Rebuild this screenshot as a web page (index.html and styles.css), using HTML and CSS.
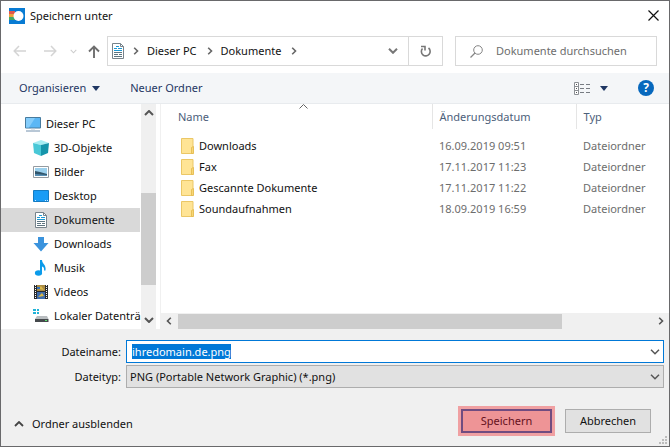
FILE: index.html
```html
<!DOCTYPE html>
<html lang="de">
<head>
  <meta charset="UTF-8" />
  <meta name="viewport" content="width=device-width, initial-scale=1" />
  <title>Speichern unter</title>
  <link rel="stylesheet" href="styles.css">
</head>
<body>
<svg class="defs" width="0" height="0">
  <symbol id="doc" viewBox="0 0 14 17">
    <path d="M1.500 .5H9.500L12.500 3.500V15.500H1.500z" fill="#fff" stroke="#77838b"/>
    <path d="M9.500 .5V3.500H12.500" fill="none" stroke="#77838b"/>
    <path d="M3 5.500H6M7 5.500H11M3 7.500H11M5 3.500H8" stroke="#1b9ad6" stroke-width="1.200"/>
    <path d="M3 9.500H11M3 11.500H7M8 11.500H11M3 13.500H11" stroke="#5d7480"/>
  </symbol>
  <symbol id="down" viewBox="0 0 10 6">
    <path d="M1 .8L5 4.800L9 .8" fill="none" stroke="currentColor" stroke-width="1.500"/>
  </symbol>
  <symbol id="right" viewBox="0 0 6 8">
    <path d="M1.200 .8L4.500 4L1.200 7.200" fill="none" stroke="currentColor" stroke-width="1.600"/>
  </symbol>
  <symbol id="triangle" viewBox="0 0 8 5"><path d="M0 0H8L4 5z" fill="#1f3763"/></symbol>
  <symbol id="folder" viewBox="0 0 13 16">
    <path d="M.5 .5H12V15.500H.5z" fill="#ffe495" stroke="#ebc766"/>
    <path d="M10.500 15.500V9.500L12.500 8.500V15.500z" fill="#f8d775" stroke="#e3b94d" stroke-width=".8"/>
  </symbol>
</svg>

<main class="dialog">
  <header class="titlebar">
    <svg width="16" height="16" viewBox="0 0 16 16">
      <path d="M0 0H16V16H0z" fill="#087bd3"/>
      <path d="M0 3H6V6H0z" fill="#e2574c"/><path d="M0 6H5V9H0z" fill="#f0a13a"/><path d="M0 9H6V12H0z" fill="#43a866"/>
      <circle cx="9.500" cy="8" r="5" fill="#fff"/>
    </svg>
    <h1>Speichern unter</h1>
    <button class="close" aria-label="Schließen">
      <svg width="11" height="11" viewBox="0 0 11 11"><path d="M.5 .5L10.500 10.500M10.500 .5L.5 10.500" stroke="#111" stroke-width="1.200"/></svg>
    </button>
  </header>

  <nav class="navbar">
    <div class="history">
      <button aria-label="Zurück" disabled><svg width="14" height="12" viewBox="0 0 14 12"><path d="M13 6H1.500M6 1L1.200 6L6 11" fill="none" stroke="#d4d4d4" stroke-width="1.500"/></svg></button>
      <button aria-label="Vorwärts" disabled><svg width="14" height="12" viewBox="0 0 14 12"><path d="M1 6H12.500M8 1L12.800 6L8 11" fill="none" stroke="#d4d4d4" stroke-width="1.500"/></svg></button>
      <button class="recent" aria-label="Zuletzt besucht" disabled><svg width="7" height="5"><use href="#down"/></svg></button>
      <button aria-label="Nach oben"><svg width="12" height="13" viewBox="0 0 12 13"><path d="M6 13V1.500M1 6.500L6 1.500L11 6.500" fill="none" stroke="#6e6e6e" stroke-width="1.900"/></svg></button>
    </div>
    <div class="address">
      <svg width="14" height="17"><use href="#doc"/></svg>
      <svg class="sep" width="6" height="8"><use href="#right"/></svg>
      <a href="#">Dieser PC</a>
      <svg class="sep" width="6" height="8"><use href="#right"/></svg>
      <a href="#">Dokumente</a>
      <svg class="sep" width="6" height="8"><use href="#right"/></svg>
      <button class="open" aria-label="Vorherige Orte"><svg width="10" height="6" viewBox="0 0 10 6"><path d="M1 .8L5 4.800L9 .8" fill="none" stroke="#777" stroke-width="2"/></svg></button>
      <button class="refresh" aria-label="Aktualisieren">
        <svg width="12" height="13" viewBox="0 0 12 13"><path d="M2.500 3.500A4.400 4.400 0 1 0 8.500 3" fill="none" stroke="#777" stroke-width="1.600"/><path d="M1 1.500H5V5.500" fill="none" stroke="#777" stroke-width="1.600"/></svg>
      </button>
    </div>
    <label class="search">
      <svg width="13" height="13" viewBox="0 0 13 13"><circle cx="8" cy="5" r="4.300" fill="none" stroke="#858585"/><path d="M5 8L.5 12.500" stroke="#858585" stroke-width="1.200"/></svg>
      <input type="text" placeholder="Dokumente durchsuchen" aria-label="Dokumente durchsuchen">
    </label>
  </nav>

  <div class="toolbar">
    <button>Organisieren <svg width="8" height="5"><use href="#triangle"/></svg></button>
    <button>Neuer Ordner</button>
    <button class="view" aria-label="Ansicht">
      <svg width="17" height="13" viewBox="0 0 17 13">
        <path d="M.5 .5H4.500V12.500H.5zM.5 4.500H4.500M.5 8.500H4.500" fill="#fff" stroke="#8b8f94"/>
        <path d="M2 2.500H3M2 6.500H3M2 10.500H3" stroke="#555"/>
        <path d="M6 2.500H10M12 2.500H16M6 6.500H10M12 6.500H16M6 10.500H10M12 10.500H16" stroke="#777c82"/>
      </svg>
      <svg width="8" height="5"><use href="#triangle"/></svg>
    </button>
    <button class="help" aria-label="Hilfe">?</button>
  </div>

  <div class="content">
    <aside class="sidebar">
      <ul class="tree">
        <li><a class="root" href="#">
          <svg width="16" height="16" viewBox="0 0 16 16"><path d="M.5 1.500H15.500V12H.5z" fill="#5bb7f5" stroke="#477b9e"/><path d="M1 2H10L4 11.500H1z" fill="#85cdfb"/><path d="M6 13H10" stroke="#bccbd8"/><path d="M1 15H15" stroke="#7390ad"/></svg>
          Dieser PC</a></li>
        <li><a href="#">
          <svg width="16" height="16" viewBox="0 0 16 16"><path d="M0 3L8 0L16 3L8 5z" fill="#a6edf3"/><path d="M0 3L8 5V16L1 13z" fill="#49c8d7"/><path d="M8 5L16 3L15 13L8 16z" fill="#1595ab"/></svg>
          3D-Objekte</a></li>
        <li><a href="#">
          <svg width="16" height="16" viewBox="0 0 16 16"><path d="M.5 2.500H15.500V13.500H.5z" fill="#fff" stroke="#949ba1"/><path d="M2 4H14V12H2z" fill="#9bd0ed"/><path d="M2 7L7 8L14 10V12H2z" fill="#31556b"/><path d="M2 10L14 11V12H2z" fill="#568fb5"/></svg>
          Bilder</a></li>
        <li><a href="#">
          <svg width="16" height="16" viewBox="0 0 16 16"><path d="M.5 2.500H15.500V13.500H.5z" fill="#199cf5" stroke="#147bc2"/><path d="M2 12.500H4M12 12.500H15" stroke="#cfeaff" stroke-dasharray="1 1"/></svg>
          Desktop</a></li>
        <li><a class="selected" href="#">
          <svg width="16" height="17"><use href="#doc"/></svg>
          Dokumente</a></li>
        <li><a href="#">
          <svg width="16" height="16" viewBox="0 0 16 16"><path d="M5 1H11V7H15.500L8 15.500L.5 7H5z" fill="#3b93dd"/></svg>
          Downloads</a></li>
        <li><a href="#">
          <svg width="16" height="16" viewBox="0 0 16 16"><ellipse cx="5.500" cy="13" rx="3.600" ry="2.700" fill="#0b9bea"/><path d="M7 0H9C9 4 13.500 4.500 12.500 10.500H11C11.500 8 10.500 7 9 6.500V13H7z" fill="#0b9bea"/></svg>
          Musik</a></li>
        <li><a href="#">
          <svg width="16" height="16" viewBox="0 0 16 16"><path d="M1 1H15V15H1z" fill="#292b2e"/><path d="M4 1H12V7H4z" fill="#a98a42"/><path d="M4 8H12V15H4z" fill="#3f6dad"/><path d="M5 5L8 2L11 6zM5 13L9 9L11 12z" fill="#d8b84a"/><path d="M4 3H7V5H4z" fill="#3574bd"/><path d="M2.500 1V15M13.500 1V15" stroke="#fff" stroke-dasharray="1 1"/></svg>
          Videos</a></li>
        <li><a href="#">
          <svg width="16" height="16" viewBox="0 0 16 16"><path d="M0 1H3V3H0zM4 1H6V3H4zM0 4H3V6H0zM4 4H6V6H4z" fill="#20b3d8"/><path d="M4 8H14L15.500 11H2z" fill="#b9bdc0"/><path d="M2 11H15.500V14H2z" fill="#45494c"/><path d="M12 12.500H14" stroke="#5be36f"/></svg>
          Lokaler Datenträ</a></li>
      </ul>
      <div class="vscroll">
        <svg width="10" height="6" viewBox="0 0 10 6"><path d="M1 5L5 1L9 5" fill="none" stroke="#555" stroke-width="2"/></svg>
        <div class="thumb"></div>
        <svg width="10" height="6" viewBox="0 0 10 6"><path d="M1 1L5 5L9 1" fill="none" stroke="#555" stroke-width="2"/></svg>
      </div>
    </aside>

    <section class="files">
      <table>
        <thead>
        <tr>
          <th class="name">Name<svg class="sort" width="9" height="5" viewBox="0 0 9 5"><path d="M.5 4.500L4.500 .5L8.500 4.500" fill="none" stroke="#666"/></svg></th>
          <th class="date">Änderungsdatum</th>
          <th class="type">Typ</th>
        </tr>
        </thead>
        <tbody>
        <tr><td><svg width="13" height="16"><use href="#folder"/></svg>Downloads</td><td>16.09.2019 09:51</td><td>Dateiordner</td></tr>
        <tr><td><svg width="13" height="16"><use href="#folder"/></svg>Fax</td><td>17.11.2017 11:23</td><td>Dateiordner</td></tr>
        <tr><td><svg width="13" height="16"><use href="#folder"/></svg>Gescannte Dokumente</td><td>17.11.2017 11:22</td><td>Dateiordner</td></tr>
        <tr><td><svg width="13" height="16"><use href="#folder"/></svg>Soundaufnahmen</td><td>18.09.2019 16:59</td><td>Dateiordner</td></tr>
        </tbody>
      </table>
      <div class="hscroll">
        <svg width="6" height="8"><use href="#right" transform="rotate(180 3 4)"/></svg>
        <div class="track"><div class="thumb"></div></div>
        <svg width="6" height="8"><use href="#right"/></svg>
      </div>
    </section>
  </div>

  <form class="form" onsubmit="return false">
    <label for="filename">Dateiname:</label>
    <div class="field">
      <input type="text" id="filename" value="ihredomain.de.png" autocomplete="off" spellcheck="false">
      <svg width="10" height="6"><use href="#down"/></svg>
    </div>
    <label for="filetype">Dateityp:</label>
    <div class="field">
      <select id="filetype"><option>PNG (Portable Network Graphic) (*.png)</option></select>
      <svg width="10" height="6"><use href="#down"/></svg>
    </div>
  </form>

  <footer class="footer">
    <button class="toggle"><svg width="10" height="6" viewBox="0 0 10 6"><path d="M1 5L5 1L9 5" fill="none" stroke="#444" stroke-width="1.800"/></svg>Ordner ausblenden</button>
    <button class="btn save">Speichern</button>
    <button class="btn">Abbrechen</button>
    <svg class="grip" width="9" height="9" viewBox="0 0 9 9"><path d="M6 0H8V2H6zM3 3H5V5H3zM6 3H8V5H6zM0 6H2V8H0zM3 6H5V8H3zM6 6H8V8H6z" fill="#bcbcbc"/></svg>
  </footer>
</main>

<script>
  const filename = document.getElementById('filename');
  filename.focus();
  filename.select();
</script>
</body>
</html>
```
FILE: styles.css
```css
* {
  box-sizing: border-box;
}
body {
  margin: 0;
  font-family: 'Noto Sans', 'Segoe UI', sans-serif;
  font-size: 11px;
  line-height: 16px;
  color: #111;
}
button, input, select {
  font: inherit;
  color: inherit;
}
button {
  background: none;
  border: none;
  padding: 0;
}
a {
  color: inherit;
  text-decoration: none;
}
svg {
  flex: none;
}
.defs {
  position: absolute;
}

.dialog {
  display: flex;
  flex-direction: column;
  min-height: 100vh;
  border: 1px solid #69696b;
  background: #fff;
}

/* Titelleiste */
.titlebar {
  display: flex;
  align-items: center;
  height: 29px;
  padding: 0 10px 0 8px;
}
.titlebar h1 {
  flex: 1;
  margin: 0 0 0 5px;
  font-size: 11px;
  font-weight: 400;
}
.close {
  display: flex;
}

/* Navigation */
.navbar {
  display: flex;
  height: 43px;
  padding: 6px 12px 7px;
}
.history {
  display: flex;
  align-items: center;
  gap: 16px;
  width: 94px;
}
.history button {
  display: flex;
}
.history .recent {
  margin: 0 -5px 0 -3px;
  color: #ccc;
}
.address {
  display: flex;
  flex: 1;
  align-items: center;
  border: 1px solid #d9d9d9;
  padding-left: 3px;
  white-space: nowrap;
}
.address .sep {
  margin: 0 8px;
  color: #666;
}
.address a + .sep {
  margin-left: 10px;
}
.address button {
  display: flex;
  align-items: center;
  justify-content: center;
  height: 100%;
}
.address .open {
  width: 30px;
  margin-left: auto;
}
.address .refresh {
  width: 34px;
  border-left: 1px solid #d9d9d9;
}
.search {
  display: flex;
  flex: 0 1 202px;
  align-items: center;
  gap: 13px;
  margin-left: 12px;
  padding-left: 14px;
  border: 1px solid #d9d9d9;
}
.search input {
  flex: 1;
  min-width: 0;
  border: none;
  outline: none;
  padding: 0;
}
.search input::placeholder {
  color: #6d6d6d;
}

/* Symbolleiste */
.toolbar {
  display: flex;
  align-items: center;
  gap: 30px;
  height: 31px;
  padding: 0 15px 0 18px;
  background: #f4f6f8;
  border-bottom: 1px solid #e8ebee;
  color: #1f3763;
}
.toolbar button {
  display: flex;
  align-items: center;
  gap: 6px;
}
.toolbar .view {
  gap: 9px;
  margin-left: auto;
}
.toolbar .help {
  justify-content: center;
  width: 16px;
  height: 16px;
  border-radius: 50%;
  background: #0768bd;
  color: #fff;
  font-size: 12px;
  font-weight: 700;
}

/* Ordnerbaum und Dateiliste */
.content {
  display: flex;
  flex: 1;
}
.sidebar {
  display: flex;
  width: 155px;
}
.tree {
  flex: 1;
  min-width: 0;
  margin: 0;
  padding: 8px 1px 0 0;
  list-style: none;
}
.tree a {
  display: flex;
  align-items: center;
  gap: 5px;
  height: 24px;
  padding-left: 32px;
  white-space: nowrap;
}
.tree .root {
  padding-left: 24px;
}
.tree .selected {
  background: #d9d9d9;
}
.vscroll {
  display: flex;
  flex-direction: column;
  align-items: center;
  width: 15px;
  padding: 6px 0;
  background: #f0f0f0;
}
.vscroll .thumb {
  width: 100%;
  height: 92px;
  margin: 77px 0 auto;
  background: #cdcdcd;
}
.files {
  display: flex;
  flex: 1;
  flex-direction: column;
  justify-content: space-between;
  margin-left: 4px;
  border-left: 1px solid #f0f0f0;
}
table {
  width: 100%;
  border-collapse: collapse;
  table-layout: fixed;
}
th {
  position: relative;
  height: 25px;
  padding: 1px 0 0 7px;
  border-right: 1px solid #e5e5e5;
  color: #4c607a;
  font-weight: 400;
  text-align: left;
}
th:last-child {
  border-right: none;
}
th.name {
  padding-left: 17px;
}
th.date {
  width: 144px;
}
th.type {
  width: 93px;
}
.sort {
  position: absolute;
  top: 0;
  left: 51%;
}
tbody::before {
  content: '';
  display: block;
  height: 6px;
}
td {
  height: 21px;
  padding: 0 0 0 7px;
  color: #6d6d6d;
}
td:first-child {
  padding-left: 20px;
  color: #111;
}
td svg {
  margin-right: 5px;
  vertical-align: -4px;
}
.hscroll {
  display: flex;
  align-items: center;
  height: 16px;
  padding: 0 5px;
  background: #f0f0f0;
}
.hscroll svg,
.vscroll svg {
  color: #555;
}
.track {
  flex: 1;
  height: 15px;
  margin: 0 6px;
}
.track .thumb {
  width: 81%;
  height: 100%;
  background: #cdcdcd;
}

/* Dateiname und Dateityp */
.form {
  display: grid;
  grid-template-columns: 120px 1fr;
  gap: 2px 5px;
  align-items: center;
  padding: 11px 5px 0 0;
  background: #f0f0f0;
}
.form label {
  text-align: right;
}
.field {
  position: relative;
  display: flex;
}
.field input,
.field select {
  width: 100%;
  height: 23px;
  padding: 0 5px;
  border: 1px solid #0078d7;
  border-radius: 0;
  outline: none;
  background: #fff;
}
.field select {
  appearance: none;
  padding: 0 3px;
  border-color: #adadad;
  background: #e1e1e1;
}
.field input::selection {
  background: #0078d7;
  color: #fff;
}
.field svg {
  position: absolute;
  top: 9px;
  right: 4px;
  color: #555;
  pointer-events: none;
}

/* Fußleiste */
.footer {
  position: relative;
  display: flex;
  align-items: flex-start;
  gap: 13px;
  height: 58px;
  padding: 21px 18px 0 13px;
  background: #f0f0f0;
}
.toggle {
  display: flex;
  align-items: center;
  gap: 8px;
  height: 30px;
  margin-right: auto;
}
.btn {
  width: 86px;
  height: 24px;
  border: 1px solid #adadad;
  background: #e1e1e1;
}
.btn.save {
  width: 91px;
  border: 2px solid #704c80;
  background: #ee9496;
  box-shadow: 0 0 0 3px #f0a0a2;
  color: #65101c;
}
.grip {
  position: absolute;
  right: 1px;
  bottom: 1px;
}
```
